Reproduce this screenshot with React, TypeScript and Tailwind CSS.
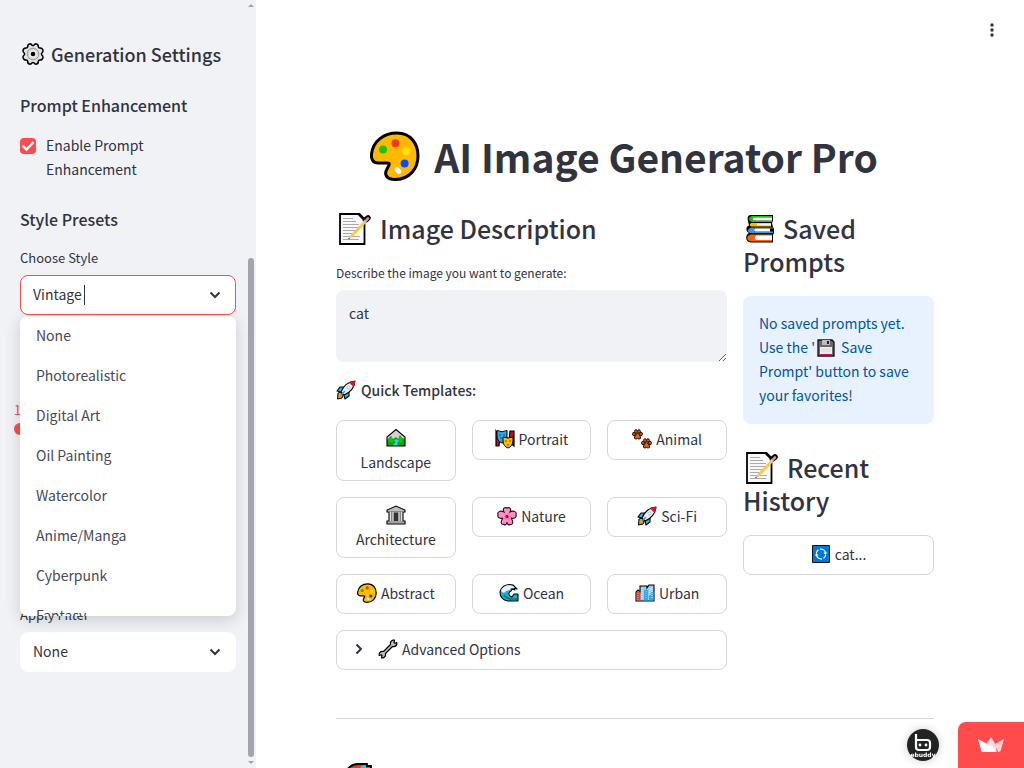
import React, { useState } from "react";

type IconProps = { className?: string };
const base = "inline-block shrink-0";

function Palette({ className = "" }: IconProps) {
  return (
    <svg viewBox="0 0 50 50" className={`${base} ${className}`} aria-hidden="true">
      <path d="M27 2C41 2 48 13 48 25C48 38 39 48.5 25 48.5C16 48.5 14 43 17 38C19 34 21 32 17 32H8C3 32 1 28 1.5 23C3 10 14 2 27 2Z" fill="#ffb900" stroke="#000" strokeWidth="3" />
      <circle cx="13" cy="18.5" r="4" fill="#16c60c" />
      <circle cx="25.5" cy="12.2" r="4" fill="#f03a17" />
      <circle cx="36.3" cy="20.2" r="4" fill="#ffe000" />
      <circle cx="34.6" cy="32.5" r="4" fill="#0a4bff" />
      <ellipse cx="28" cy="39.5" rx="3.8" ry="2.6" transform="rotate(45 28 39.5)" fill="#fff" />
    </svg>
  );
}

function Memo({ className = "" }: IconProps) {
  return (
    <svg viewBox="0 0 32 32" className={`${base} ${className}`} aria-hidden="true">
      <path d="M1 1H20.500L25.500 6V31H1Z" fill="#f8f8f8" stroke="#000" strokeWidth="1.800" />
      <path d="M4 5.500H14M4 8.500H17M4 11.500H20M4 14.500H19M4 17.500H17M4 20.500H14M4 23.500H21M4 26.500H20" stroke="#aaa" strokeWidth="1" />
      <path d="M20 1.500L25.500 7" stroke="#000" strokeWidth="2.400" />
      <path d="M26.500 7L29 5" stroke="#000" strokeWidth="5.500" strokeLinecap="round" />
      <path d="M12.500 23L26 9" stroke="#ffc83d" strokeWidth="2.800" />
      <path d="M25 9.500L27 7.500" stroke="#c8c8c8" strokeWidth="2.800" />
      <path d="M27.500 7L29 5.500" stroke="#df8f88" strokeWidth="2.600" strokeLinecap="round" />
      <path d="M9.500 26L11.400 21.900L13.600 24.100Z" fill="#e8c6a0" />
      <circle cx="10" cy="25.500" r=".7" fill="#333" />
    </svg>
  );
}

function Books({ className = "" }: IconProps) {
  return (
    <svg viewBox="0 0 30 30" className={`${base} ${className}`} aria-hidden="true">
      <path d="M5 1H28V7L27 9L28 13L29 15V19L28 21V28.500H6C0 28 0 21 4 19C0 17 1 12 4 11.500C2 4 2 2 5 1Z" fill="#000" />
      <path d="M27 2H7C3 3 3 7 7 8H27V6.500H9V3.500H27Z" fill="#16c60c" />
      <path d="M9 3.500H27V6.500H9Q7 5 9 3.500Z" fill="#fff" />
      <path d="M26 9H6Q3.500 11 6 12.500H26Z" fill="#ffb900" />
      <path d="M12 9.500H26V11.500H12Z" fill="#fff4df" />
      <path d="M28 13.500H6Q0 16 5 19H28V17.500H9V14.500H28Z" fill="#3a96dd" />
      <path d="M10 14.500H25V17.500H10Q8 16 10 14.500Z" fill="#fff" />
      <path d="M27 20.500H6C1 21 1 27 6 27.500H27Z" fill="#f7630c" />
      <path d="M11 21.500H27V26H11Q9 24 11 21.500Z" fill="#fff" />
    </svg>
  );
}

function Gear({ className = "" }: IconProps) {
  return (
    <svg viewBox="0 0 24 24" className={`${base} ${className}`} aria-hidden="true">
      <path d="M8.500 2Q10 1.500 11 3.200Q12 4 13 3.200Q14 1.500 15.500 2Q17.500 2.500 17.200 4.500Q17.500 6.200 19.200 6Q21.500 6 22 8.500Q22.300 10 20.800 11Q20 12 20.800 13Q22.300 14 22 15.500Q21.500 18 19.200 18Q17.500 17.800 17.200 19.500Q17.500 21.500 15.500 22Q14 22.500 13 20.800Q12 20 11 20.800Q10 22.500 8.500 22Q6.500 21.500 6.800 19.500Q6.500 17.800 4.800 18Q2.500 18 2 15.500Q1.700 14 3.200 13Q4 12 3.200 11Q1.700 10 2 8.500Q2.500 6 4.800 6Q6.500 6.200 6.800 4.500Q6.500 2.500 8.500 2Z" fill="#e2e2e2" stroke="#000" strokeWidth="1.500" />
      <circle cx="12" cy="12" r="5.800" fill="#d6d6d6" stroke="#8a8a8a" strokeWidth=".8" />
      <circle cx="12" cy="12" r="3.800" fill="#eee" />
      <circle cx="12" cy="12" r="2.300" fill="#000" />
    </svg>
  );
}

function Rocket({ className = "" }: IconProps) {
  return (
    <svg viewBox="0 0 20 20" className={`${base} ${className}`} aria-hidden="true">
      <path d="M2 13L5 12L7 16L6 18L1.500 19Z" fill="#f7931e" stroke="#000" strokeWidth="1" />
      <path d="M8 7H4L1 11L5 12ZM13 12V16L9 19L8 15Z" fill="#2bb3e8" stroke="#000" strokeWidth="1.100" strokeLinejoin="round" />
      <path d="M5 12C8 5 13 1.500 19 1C18.500 7 15 12 8 15Z" fill="#e8f1f7" stroke="#000" strokeWidth="1.100" strokeLinejoin="round" />
      <path d="M13 2.500Q16 1 19 1Q19 4 17.500 7Z" fill="#e81224" />
      <circle cx="12.500" cy="7.500" r="1.500" fill="#fff" stroke="#8aa" strokeWidth=".6" />
      <path d="M5 15L9 11" stroke="#2aa5da" strokeWidth="1.500" />
    </svg>
  );
}

function Landscape({ className = "" }: IconProps) {
  return (
    <svg viewBox="0 0 20 20" className={`${base} ${className}`} aria-hidden="true">
      <path d="M1 18V9L10 1.500L19 9V18Z" fill="#d2d2d2" />
      <path d="M1 12L3 10L5 8L7 11L10 9L12 11L14 7L16 10L19 11V18H1Z" fill="#10a410" />
      <path d="M5 8L8 14H2ZM14 7L17 14H11Z" fill="#13c40d" />
      <path d="M10 11L8 13L10 14L6 18H12L11 15L13 13Z" fill="#31d2f7" />
      <path d="M1 18V9L10 1.500L19 9V18Z" fill="none" stroke="#000" strokeWidth="1.100" />
    </svg>
  );
}

function Masks({ className = "" }: IconProps) {
  return (
    <svg viewBox="0 0 20 20" className={`${base} ${className}`} aria-hidden="true">
      <path d="M1 2L5 9L4 17H1ZM15 2H19V17L14 13Z" fill="#c50f1f" stroke="#000" strokeWidth="1.200" />
      <path d="M2 1.500Q7 4 12 1.500V8Q12 13 7 14Q2 12 2 7Z" fill="#28a8ea" stroke="#000" />
      <path d="M8 8Q13 10 18 8V12Q17 18 13 19Q8 17 8 12Z" fill="#ffb900" stroke="#000" />
      <path d="M4 6H6M8 6H10M5 9H9M10 12H12M14 12H16M12 16Q13 15 14 16" stroke="#1d4550" strokeWidth=".8" fill="none" />
    </svg>
  );
}

function Paws({ className = "" }: IconProps) {
  return (
    <svg viewBox="0 0 20 20" className={`${base} ${className}`} aria-hidden="true">
      {[0, 9].map((offset) => (
        <g key={offset} transform={`translate(${offset} ${offset})`} fill="#f25a10" stroke="#1d1008" strokeWidth="1">
          <ellipse cx="2" cy="5" rx="1.400" ry="1.800" />
          <ellipse cx="4" cy="2.500" rx="1.400" ry="1.800" />
          <ellipse cx="7" cy="2.500" rx="1.400" ry="1.800" />
          <ellipse cx="9" cy="5" rx="1.400" ry="1.800" />
          <path d="M2.500 8Q4 4.500 5.500 4.500T8.500 8Q9 10 7 10L5.500 9.500L4 10Q2 10 2.500 8Z" />
        </g>
      ))}
    </svg>
  );
}

function Museum({ className = "" }: IconProps) {
  return (
    <svg viewBox="0 0 20 20" className={`${base} ${className}`} aria-hidden="true">
      <path d="M1 7V5L10 1L19 5V7H17V16H19V19H1V16H3V7Z" fill="#bcbcbc" stroke="#000" strokeWidth="1.100" />
      <path d="M4 7H16V16H4Z" fill="#777" />
      <path d="M7 8H13V16H7Z" fill="#333" />
      <path d="M4.500 7V16M7 7V16M13 7V16M15.500 7V16" stroke="#ddd" strokeWidth="1.300" />
      <path d="M2 6.500H18M2 17H18" stroke="#888" />
    </svg>
  );
}

function Flower({ className = "" }: IconProps) {
  return (
    <svg viewBox="0 0 20 20" className={`${base} ${className}`} aria-hidden="true">
      <path d="M7 6C5 2 8 1 10 2C12 1 15 2 13 6C17 4 20 6 19 9C20 12 16 13 14 12C17 16 16 19 13 18.500C11 20 10 17 10 16C10 17 9 20 7 18.500C4 19 3 16 6 12C4 13 0 12 1 9C0 6 3 4 7 6Z" fill="#ff8fc3" stroke="#241019" strokeWidth="1.100" />
      <circle cx="10" cy="10.500" r="3.500" fill="#f473ae" />
      <path d="M10 6V15M6 9L14 12M14 9L6 12" stroke="#ffc3dd" strokeWidth=".7" />
      <circle cx="10" cy="10.500" r="1.700" fill="#c30052" />
    </svg>
  );
}

function Wave({ className = "" }: IconProps) {
  return (
    <svg viewBox="0 0 20 20" className={`${base} ${className}`} aria-hidden="true">
      <path d="M19 18H9C3 17 1 13 1 9C2 4 7 0 14 2L18 6L15 5L16 7L13 6L12 8C9 9 9 13 13 14L15 11H19Z" fill="#10b5d1" stroke="#000" strokeWidth="1.100" strokeLinejoin="round" />
      <path d="M2 8C3 4 8 1 14 3L16 5H12L11 7L7 8L5 10L3 9Z" fill="#eee" />
      <path d="M5 12Q8 17 18 16" stroke="#16788b" strokeWidth="2" fill="none" />
    </svg>
  );
}

function City({ className = "" }: IconProps) {
  return (
    <svg viewBox="0 0 20 20" className={`${base} ${className}`} aria-hidden="true">
      <path d="M1 18V9L3 7L5 9V3H12V5L14 2H19V18Z" fill="#8dcff0" stroke="#000" strokeWidth="1.100" />
      <path d="M1.500 9L3 7.500L5.500 9V17.500H1.500Z" fill="#da492b" />
      <path d="M9 7H13V17.500H9ZM16 9H18.500V17.500H14V13Z" fill="#35a9e8" />
      <path d="M7 5V16M15 5V12M17 4V15" stroke="#f4fafc" strokeWidth="1" strokeDasharray="1 1" />
      <path d="M3 10V17M11 8V16" stroke="#78c6ee" strokeDasharray="1 1" />
    </svg>
  );
}

function Wrench({ className = "" }: IconProps) {
  return (
    <svg viewBox="0 0 20 20" className={`${base} ${className}`} aria-hidden="true">
      <path d="M12.500 5.500Q12 2 15 1.200L16.500 1.200L16 3.500L17 4.200L18.800 3.500Q19.300 7 16 7.700L14.500 7.500L7.500 14.500Q8 18 5 18.800L3.500 18.800L4 16.500L3 15.800L1.200 16.500Q.7 13 4 12.300L5.500 12.500Z" fill="#b9bcc0" stroke="#000" strokeWidth="1.200" strokeLinejoin="round" />
    </svg>
  );
}

function Floppy({ className = "" }: IconProps) {
  return (
    <svg viewBox="0 0 20 20" className={`${base} ${className}`} aria-hidden="true">
      <path d="M2 2H16L18 4V18H2Z" fill="#696969" stroke="#111" strokeWidth="1.300" />
      <path d="M6 2H14V7H6Z" fill="#bcbcbc" />
      <path d="M11 3H13V6H11Z" fill="#222" />
      <path d="M4 9H16V16H4Z" fill="#eee" />
      <path d="M4 16H16V17.500H4Z" fill="#df0b60" />
      <path d="M5 11H15M5 13H15" stroke="#ccc" strokeWidth=".7" />
    </svg>
  );
}

function Refresh({ className = "" }: IconProps) {
  return (
    <svg viewBox="0 0 20 20" className={`${base} ${className}`} aria-hidden="true">
      <path d="M1.500 1.500H18.500V18.500H1.500Z" fill="#0078d7" stroke="#111" />
      <path d="M9 5.200A4.900 4.900 0 0 1 14.600 9M11 14.800A4.900 4.900 0 0 1 5.400 11M5.300 9A4.900 4.900 0 0 1 7.500 5.800M14.700 11A4.900 4.900 0 0 1 12.500 14.200" fill="none" stroke="#fff" strokeWidth="1.200" />
      <path d="M16.200 8.500L14.500 11L12.500 8.500ZM3.800 11.500L5.500 9L7.500 11.500Z" fill="#fff" />
    </svg>
  );
}

function Frame({ className = "" }: IconProps) {
  return (
    <svg viewBox="0 0 34 34" className={`${base} ${className}`} aria-hidden="true">
      <path d="M2 8Q7 1 14 1H23V3H27V28Q16 34 3 28Z" fill="#f03a17" stroke="#000" strokeWidth="1.800" />
      <path d="M16 5Q18 2 22 2V6L19 10H12Z" fill="#31c5f4" />
    </svg>
  );
}

function Chevron({ className = "" }: IconProps) {
  return (
    <svg viewBox="0 0 12 12" className={className} fill="none" stroke="currentColor" strokeWidth="2" aria-hidden="true">
      <path d="M1.500 3.500L6 8L10.500 3.500" />
    </svg>
  );
}

const presets = ["None", "Photorealistic", "Digital Art", "Oil Painting", "Watercolor", "Anime/Manga", "Cyberpunk", "Fantasy"];

const templates = [
  { name: "Landscape", Icon: Landscape, stacked: true },
  { name: "Portrait", Icon: Masks },
  { name: "Animal", Icon: Paws },
  { name: "Architecture", Icon: Museum, stacked: true },
  { name: "Nature", Icon: Flower },
  { name: "Sci-Fi", Icon: Rocket },
  { name: "Abstract", Icon: Palette },
  { name: "Ocean", Icon: Wave },
  { name: "Urban", Icon: City },
];

function Sidebar() {
  const [style, setStyle] = useState("Vintage");
  return (
    <aside className="flex w-64 shrink-0 bg-[#f0f2f6]">
      <div className="min-w-0 flex-1 pt-[38px] pr-[11px] pl-5">
        <h2 className="flex h-8 items-center gap-1.5 text-[18px] font-medium whitespace-nowrap">
          <Gear className="ml-px size-6" />Generation Settings
        </h2>
        <h3 className="mt-[23px] text-[16px] leading-6 font-medium">Prompt Enhancement</h3>
        <label className="mt-4 flex gap-2.5 leading-6">
          <span className="relative mt-[5px] size-4 shrink-0">
            <input type="checkbox" defaultChecked className="peer block size-4 appearance-none rounded bg-white checked:bg-[#ff4b4b]" />
            <svg viewBox="0 0 16 16" className="pointer-events-none absolute inset-0 hidden peer-checked:block" aria-hidden="true">
              <path d="M2.500 7.500L6.500 11.500L13.500 4" fill="none" stroke="#fff" strokeWidth="2.400" />
            </svg>
          </span>
          <span>Enable Prompt Enhancement</span>
        </label>
        <h3 className="mt-[26px] text-[16px] leading-6 font-medium">Style Presets</h3>
        <label htmlFor="style" className="mt-[17px] block text-[13px] leading-5">Choose Style</label>
        <div className="relative mt-[7px]">
          <div className="flex h-10 items-center rounded-lg border border-[#ff4b4b] bg-white px-3">
            <input id="style" role="combobox" aria-expanded="true" aria-controls="style-options" value={style} onChange={(e) => setStyle(e.target.value)} className="field-sizing-content min-w-0 pb-0.5 outline-none" />
            <span className="ml-0.5 h-5 w-px bg-[#31333f]" />
            <Chevron className="mr-0.5 ml-auto size-3" />
          </div>
          <ul id="style-options" role="listbox" aria-label="Choose Style" className="absolute inset-x-0 top-full z-10 mt-px h-[300px] overflow-hidden rounded-lg bg-white text-[#484a55] shadow-[0_4px_16px_rgba(0,0,0,0.16)]">
            {presets.map((preset) => (
              <li key={preset} role="option" aria-selected={preset === style} onClick={() => setStyle(preset)} className="flex h-10 items-center px-4 pb-0.5">{preset}</li>
            ))}
          </ul>
        </div>
        <div className="-mx-1.5 mt-[85px] flex flex-col text-[#ff4b4b]">
          <span className="text-[13px] leading-5" aria-hidden="true">1</span>
          <input type="range" min="1" max="10" defaultValue="1" aria-label="Amount" className="mt-[3px] h-3 w-full appearance-none bg-transparent [&::-webkit-slider-thumb]:size-3 [&::-webkit-slider-thumb]:appearance-none [&::-webkit-slider-thumb]:rounded-full [&::-webkit-slider-thumb]:bg-[#ff4b4b]" />
        </div>
        <label htmlFor="filter" className="mt-[170px] block text-[13px] leading-5">Apply Filter</label>
        <div className="relative mt-[7px]">
          <select id="filter" className="h-10 w-full appearance-none rounded-lg bg-white px-[13px] pb-0.5 outline-none">
            <option>None</option>
          </select>
          <Chevron className="pointer-events-none absolute top-3.5 right-[15px] size-3" />
        </div>
      </div>
      <div className="flex w-[9px] flex-col items-start py-1" aria-hidden="true">
        <svg viewBox="0 0 6 3" className="ml-px h-[3px] w-1.5"><path d="M0 3L3 0L6 3Z" fill="#a3a3a8" /></svg>
        <div className="ml-px flex min-h-0 w-1.5 flex-1 flex-col pt-0.5 pb-1">
          <span className="min-h-0 flex-1" />
          <span className="min-h-0 w-1.5 flex-[2] rounded-full bg-[#a3a5ad]" />
        </div>
        <svg viewBox="0 0 6 3" className="ml-px h-[3px] w-1.5"><path d="M0 0L3 3L6 0Z" fill="#a3a3a8" /></svg>
      </div>
    </aside>
  );
}

const outlined = "rounded-lg border border-[#d6d6d9] bg-white";

export default function App() {
  return (
    <div className="flex h-screen overflow-hidden bg-white font-['Noto_Sans_CJK_SC',sans-serif] text-[14px] text-[#31333f]">
      <Sidebar />
      <main className="relative min-w-0 flex-1 overflow-hidden pt-[130px] pr-[90px] pl-20">
        <button aria-label="Menu" className="absolute top-5 right-[22px] flex size-5 items-center justify-center">
          <svg viewBox="0 0 4 14" className="h-3.5 w-1" fill="currentColor"><circle cx="2" cy="2" r="1.700" /><circle cx="2" cy="7" r="1.700" /><circle cx="2" cy="12" r="1.700" /></svg>
        </button>
        <h1 className="flex h-[52px] items-center justify-center gap-3.5 pr-[22px] text-[39px] font-bold whitespace-nowrap">
          <Palette className="size-[50px]" />AI Image Generator Pro
        </h1>
        <div className="mt-[30px] grid grid-cols-[391fr_191fr] gap-4">
          <section className="min-w-0">
            <h2 className="flex h-[34px] items-center gap-[9px] text-[25px] font-medium whitespace-nowrap">
              <Memo className="ml-[3px] size-8" />Image Description
            </h2>
            <label htmlFor="description" className="mt-[17px] block text-[12px] leading-5">Describe the image you want to generate:</label>
            <textarea id="description" defaultValue="cat" className="mt-[7px] block h-[72px] w-full rounded-lg bg-[#f0f2f6] px-[13px] py-[11px] leading-6 outline-none" />
            <p className="mt-4 flex h-6 items-center gap-[5px] font-medium"><Rocket className="size-5" />Quick Templates:</p>
            <div className="mt-[18px] grid grid-cols-3 items-start gap-4">
              {templates.map(({ name, Icon, stacked }) => (
                <button key={name} className={`${outlined} flex items-center justify-center leading-6 ${stacked ? "min-h-[61px] flex-col gap-0.5 pt-[7px] pb-[6px]" : "h-10 gap-1 pb-0.5"}`}>
                  <Icon className="size-5" />
                  <span>{name}</span>
                </button>
              ))}
            </div>
            <details className={`${outlined} mt-4`}>
              <summary className="flex h-[38px] cursor-pointer list-none items-center px-4 pb-0.5">
                <Chevron className="size-3 -rotate-90" />
                <Wrench className="mr-1 ml-[13px] size-5" />Advanced Options
              </summary>
            </details>
          </section>
          <section className="min-w-0">
            <h2 className="text-[25px] leading-[33px] font-medium">
              <Books className="mr-2 ml-0.5 size-[30px] align-[-5px]" />Saved<br />Prompts
            </h2>
            <p className="mt-[18px] rounded-lg bg-[#e8f2ff] px-4 pt-[15px] pb-[17px] leading-6 text-[#0054a3]">
              No saved prompts yet. Use the '<Floppy className="mr-[5px] ml-px size-5 align-[-5px]" />Save Prompt' button to save your favorites!
            </p>
            <h2 className="mt-[27px] text-[25px] leading-[33px] font-medium">
              <Memo className="mr-[9px] ml-[3px] size-8 align-[-6px]" />Recent<br />History
            </h2>
            <button className={`${outlined} mt-[18px] flex h-10 w-full items-center justify-center gap-1 pb-0.5`}><Refresh className="size-5" />cat...</button>
          </section>
        </div>
        <hr className="mt-12 border-[#d6d6d9]" />
        <h2 className="mt-11"><Frame className="ml-2 size-[34px]" /></h2>
      </main>
      <a href="#profile" aria-label="ebuddy" className="fixed right-[85px] bottom-[7px] size-8 rounded-full shadow-[0_0_10px_rgba(0,0,0,0.2)]">
        <svg viewBox="0 0 32 32" className="size-8">
          <circle cx="16" cy="16" r="16" fill="#222423" />
          <path d="M9 5V18Q9 21 12 21H20Q23 21 23 18V14Q23 11 20 11H9" fill="none" stroke="#fff" strokeWidth="2.200" />
          <circle cx="13" cy="16" r="1.400" fill="#fff" /><circle cx="19" cy="16" r="1.400" fill="#fff" />
          <text x="16" y="28" textAnchor="middle" fill="#fff" fontFamily="DejaVu Sans, sans-serif" fontSize="6" fontWeight="bold">ebuddy</text>
        </svg>
      </a>
      <a href="#hosting" aria-label="Hosted with Streamlit" className="fixed right-0 bottom-0 flex h-[46px] w-[66px] items-center justify-center rounded-tl-lg bg-[#ff4b4b]">
        <svg viewBox="0 0 26 16" className="h-4 w-[26px]">
          <path d="M0 2L8.500 6.500L5 15Q4 15 3.500 14Z" fill="#fff" />
          <path d="M13 0L19 10L18 15H5L8 7Z" fill="#ffd9dc" />
          <path d="M26 2L17 7L20 15Q22 15 22.500 14Z" fill="#ffd1d4" />
          <path d="M2 5L14 9L19 15H5Q4 15 3.500 14Z" fill="#fff" />
        </svg>
      </a>
    </div>
  );
}
